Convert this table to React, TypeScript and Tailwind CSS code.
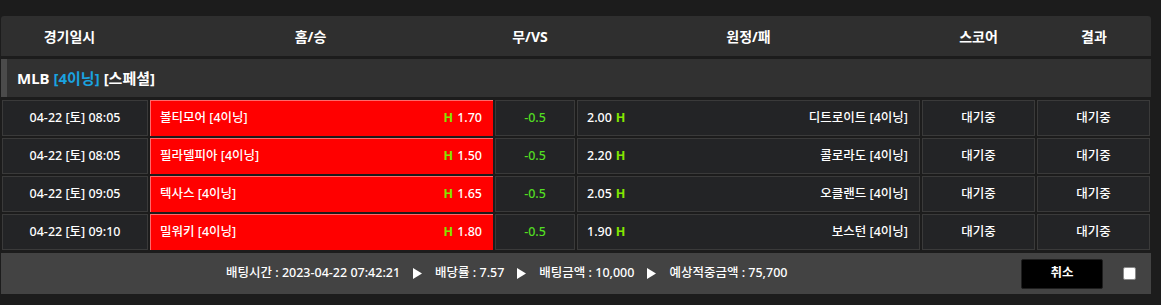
import React from "react";

const rows = [
  { time: "04-22 [토] 08:05", home: "볼티모어 [4이닝]", ho: "1.70", draw: "-0.5", ao: "2.00", away: "디트로이트 [4이닝]" },
  { time: "04-22 [토] 08:05", home: "필라델피아 [4이닝]", ho: "1.50", draw: "-0.5", ao: "2.20", away: "콜로라도 [4이닝]" },
  { time: "04-22 [토] 09:05", home: "텍사스 [4이닝]", ho: "1.65", draw: "-0.5", ao: "2.05", away: "오클랜드 [4이닝]" },
  { time: "04-22 [토] 09:10", home: "밀워키 [4이닝]", ho: "1.80", draw: "-0.5", ao: "1.90", away: "보스턴 [4이닝]" },
];

const Tri = () => (
  <svg width="9" height="11" viewBox="0 0 9 11" className="mx-[13px]">
    <path d="M0 0 L9 5.5 L0 11 Z" fill="#ffffff" />
  </svg>
);

export default function App() {
  return (
    <div
      className="w-[1161px] h-[305px] bg-[#1c1c1c] pt-[16px] pl-[1px] overflow-hidden"
      style={{ fontFamily: '"Noto Sans", "Noto Sans CJK KR", sans-serif' }}
    >
      <div className="w-[1150px] flex flex-col">
        {/* header */}
        <div className="h-[40px] flex items-center rounded-t-[3px] bg-[#2f2f2f] text-white text-[14px] font-bold">
          <div className="w-[137px] text-center">경기일시</div>
          <div className="w-[345px] text-center">홈/승</div>
          <div className="w-[94px] text-center">무/VS</div>
          <div className="w-[343px] text-center">원정/패</div>
          <div className="w-[117px] text-center">스코어</div>
          <div className="w-[114px] text-center">결과</div>
        </div>
        {/* league */}
        <div className="mt-[3px] h-[38px] flex items-center bg-[#313131] border-l-[6px] border-[#4b4b4b] pl-[10px] text-[15px] font-bold text-white">
          <span>MLB</span>
          <span className="ml-[4px] text-[#1aa3e0]">[4이닝]</span>
          <span className="ml-[4px]">[스페셜]</span>
        </div>
        {/* rows */}
        <div className="mt-[3px] flex flex-col gap-[2px] px-[1px]">
          {rows.map((r, i) => (
            <div key={i} className="h-[36px] flex gap-[2px] text-[12.5px] font-medium text-white">
              <div className="w-[146px] flex items-center justify-center bg-[#232426] border border-[#3a3a3a]">
                {r.time}
              </div>
              <div className="w-[343px] flex items-center justify-between bg-[#ff0000] border-t border-l border-[#ff6a6a] pl-[9px] pr-[11px]">
                <span>{r.home}</span>
                <span className="flex items-center">
                  <span className="text-[#84e600] font-bold mr-[4px]">H</span>
                  <span>{r.ho}</span>
                </span>
              </div>
              <div className="w-[80px] flex items-center justify-center bg-[#232426] border border-[#3a3a3a] text-[#52dc22]">
                {r.draw}
              </div>
              <div className="w-[343px] flex items-center justify-between bg-[#232426] border border-[#3a3a3a] pl-[9px] pr-[11px]">
                <span className="flex items-center">
                  <span>{r.ao}</span>
                  <span className="text-[#84e600] font-bold ml-[4px]">H</span>
                </span>
                <span>{r.away}</span>
              </div>
              <div className="w-[113px] flex items-center justify-center bg-[#232426] border border-[#3a3a3a]">
                대기중
              </div>
              <div className="w-[113px] flex items-center justify-center bg-[#232426] border border-[#3a3a3a]">
                대기중
              </div>
            </div>
          ))}
        </div>
        {/* footer */}
        <div className="mt-[3px] h-[41px] flex items-center bg-[#434343] pl-[225px] pr-[15px] text-[12.5px] font-medium text-white">
          <span>배팅시간 : 2023-04-22 07:42:21</span>
          <Tri />
          <span>배당률 : 7.57</span>
          <Tri />
          <span>배팅금액 : 10,000</span>
          <Tri />
          <span>예상적중금액 : 75,700</span>
          <button className="ml-auto w-[82px] h-[30px] bg-black border border-[#1e1e1e] rounded-[2px] text-white text-[12.5px] font-bold">
            취소
          </button>
          <div className="ml-[20px] w-[13px] h-[13px] bg-white border border-[#8a8a8a] rounded-[2px]" />
        </div>
      </div>
    </div>
  );
}
